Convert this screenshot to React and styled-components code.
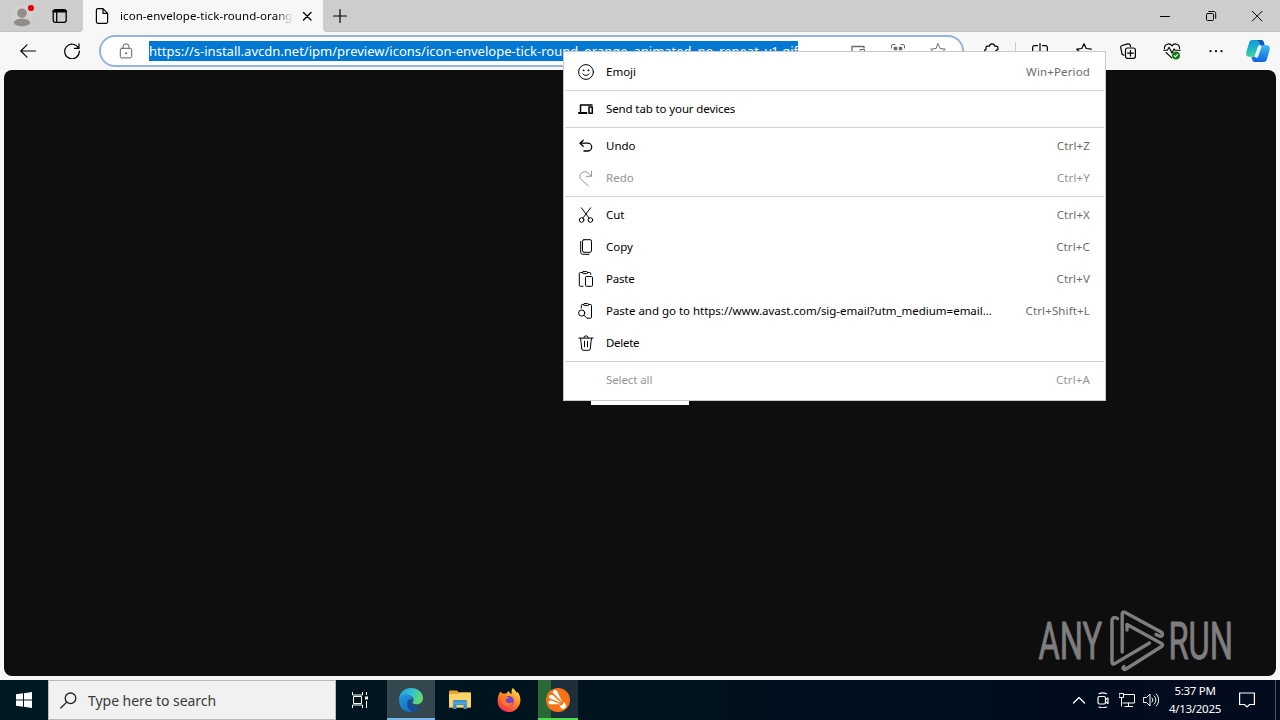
import React from 'react';
import styled, { createGlobalStyle } from 'styled-components';

const GlobalStyle = createGlobalStyle`
  * {
    box-sizing: border-box;
  }
  body {
    margin: 0;
    overflow: hidden;
    font-family: 'Noto Sans', 'Open Sans', sans-serif;
    font-size: 12px;
    color: #000;
  }
`;

const Desktop = styled.div`
  width: 1280px;
  height: 720px;
  display: flex;
  flex-direction: column;
  position: relative;
  background: #f7f7f7;
`;

const TabStrip = styled.div`
  height: 32px;
  display: flex;
  align-items: stretch;
  background: #f7f7f7;
`;

const StripStart = styled.div`
  width: 83px;
  display: flex;
  align-items: center;
  padding-left: 11px;
  gap: 16px;
  background: #cdcdcd;
  border-bottom: 1px solid #c2c2c2;
  border-bottom-right-radius: 4px;
`;

const Tab = styled.div`
  width: 240px;
  display: flex;
  align-items: center;
  padding-left: 11px;
`;

const TabTitle = styled.span`
  width: 173px;
  margin-left: 10px;
  padding-bottom: 1px;
  white-space: nowrap;
  font-size: 11.5px;
  letter-spacing: 0.07px;
  mask-image: linear-gradient(to right, #000 90%, transparent);
`;

const StripEnd = styled.div`
  flex: 1;
  display: flex;
  align-items: center;
  justify-content: space-between;
  padding: 0 12px 0 9px;
  background: #cdcdcd;
  border-bottom: 1px solid #c2c2c2;
  border-bottom-left-radius: 4px;
`;

const WindowButtons = styled.div`
  display: flex;
  gap: 24px;
`;

const Toolbar = styled.div`
  height: 38px;
  display: flex;
  align-items: center;
  padding-left: 12px;
`;

const ToolButton = styled.div`
  width: 32px;
  height: 32px;
  display: flex;
  align-items: center;
  justify-content: center;
  margin-right: ${props => (props.$gap === undefined ? 12 : props.$gap)}px;
`;

const ToolDivider = styled.div`
  width: 1px;
  height: 18px;
  margin-right: 8px;
  background: #c8c8c8;
`;

const AddressBar = styled.div`
  width: 865px;
  height: 32px;
  display: flex;
  align-items: center;
  margin-right: 12px;
  padding: 0 15px 0 17px;
  border: 2px solid #96b2df;
  border-radius: 16px;
  background: #fff;
`;

const Url = styled.span`
  height: 20px;
  width: 649px;
  flex-shrink: 0;
  margin-left: 15px;
  margin-right: 52px;
  line-height: 20px;
  white-space: nowrap;
  font-size: 13px;
  letter-spacing: 0.005px;
  background: #0078d4;
  color: #fff;
`;

const AddressIcons = styled.div`
  display: flex;
  gap: 24px;
`;

const Page = styled.div`
  height: 606px;
  margin: 0 4px;
  display: flex;
  align-items: center;
  justify-content: center;
  border-radius: 8px;
  background: #0e0e0e;
`;

const Picture = styled.div`
  width: 98px;
  height: 64px;
  background: #fff;
`;

const Watermark = styled.svg`
  position: absolute;
  left: 1034px;
  top: 606px;
`;

const Menu = styled.div`
  position: absolute;
  left: 563px;
  top: 51px;
  width: 543px;
  padding: 4px 1px;
  border: 1px solid #c9c9c9;
  background: #fff;
`;

const MenuItem = styled.div`
  height: 32px;
  display: flex;
  align-items: center;
  padding: 0 14px 0 13px;
  color: ${props => (props.$disabled ? '#949494' : '#000')};
`;

const MenuIcon = styled.span`
  width: 16px;
  height: 16px;
  margin-right: 12px;
`;

const MenuLabel = styled.span`
  flex: 1;
  padding-bottom: 2px;
  font-size: 11.5px;
  letter-spacing: ${props => props.$spacing || 0}px;
  white-space: nowrap;
`;

const Shortcut = styled.span`
  padding-bottom: 2px;
  font-size: 11.5px;
  letter-spacing: 0.14px;
  color: ${props => (props.$disabled ? '#949494' : '#6b6b6b')};
`;

const MenuLine = styled.div`
  height: 1px;
  margin: 2px 0;
  background: #d3d3d3;
`;

const Taskbar = styled.div`
  height: 40px;
  margin-top: 4px;
  display: flex;
  background: linear-gradient(to right, #001923, #00131f 45%, #000d1d 80%, #030c1e);
  color: #fff;
`;

const TaskCell = styled.div`
  width: ${props => props.$width || 48}px;
  display: flex;
  align-items: center;
  justify-content: center;
`;

const TaskViewCell = styled(TaskCell)`
  padding-right: 4px;
`;

const EdgeCell = styled(TaskCell)`
  background: #34474f;
  border-bottom: 2px solid #78b7ea;
  padding-top: 2px;
`;

const AvastCell = styled(TaskCell)`
  background: linear-gradient(to right, #2a6935 13px, #1c2f3a 13px);
  border-bottom: 2px solid #50dc50;
  padding-top: 2px;
`;

const SearchBox = styled.div`
  width: 288px;
  display: flex;
  align-items: center;
  padding-left: 11px;
  gap: 11px;
  border: 1px solid #b9b9b9;
  background: #f1f1f1;
  color: #3a3a3a;
  font-size: 14px;
  letter-spacing: -0.04px;
`;

const Tray = styled.div`
  margin-left: auto;
  display: flex;
  align-items: center;
`;

const TrayIcons = styled.div`
  display: flex;
  align-items: center;
  gap: 8px;
  margin-right: 1px;
`;

const Clock = styled.div`
  width: 70px;
  text-align: center;
  font-size: 11.5px;
  line-height: 18px;
  letter-spacing: -0.3px;
`;

const NoticeIcon = styled.div`
  display: flex;
  margin: 0 20px 0 9px;
`;

const ShowDesktop = styled.div`
  width: 5px;
  height: 40px;
  border-left: 1px solid #4b5365;
`;

const IconSvg = styled.svg`
  display: block;
  flex-shrink: 0;
`;

const Icon = ({ size = 16, box = 16, color = 'currentColor', weight = 1, children }) => (
  <IconSvg
    width={size}
    height={size}
    viewBox={`0 0 ${box} ${box}`}
    fill="none"
    stroke={color}
    strokeWidth={weight}
    strokeLinecap="round"
    strokeLinejoin="round"
  >
    {children}
  </IconSvg>
);

const icons = {
  emoji: (
    <>
      <circle cx="8" cy="8" r="7.4" />
      <path d="M4.8 9.8c1.5 2.2 4.9 2.2 6.4 0" />
      <circle cx="5.6" cy="6.3" r=".6" fill="currentColor" strokeWidth=".5" />
      <circle cx="10.4" cy="6.3" r=".6" fill="currentColor" strokeWidth=".5" />
    </>
  ),
  devices: (
    <>
      <path d="M2.5 11V4h11.5" strokeWidth="1.5" />
      <path d="M.2 12h9" strokeWidth="2" strokeLinecap="butt" />
      <path d="M11 6h3.300v6.200H11z" strokeWidth="1.500" />
    </>
  ),
  undo: <path d="M5.200 2.200L2 5.200l3.200 3.100M2.200 5.200h7.600a3.900 3.900 0 0 1 0 7.800H6" strokeWidth="1.300" />,
  redo: <path d="M13.500 1.300v5H8.400M13.200 6L10 2.800C5.500-.8-.7 5.300 3 9.400l7.500 6.600" />,
  cut: (
    <>
      <circle cx="3.600" cy="13" r="2.300" />
      <circle cx="12.400" cy="13" r="2.300" />
      <path d="M3.400.8l7.800 10.400M12.600.8L4.800 11.200" />
    </>
  ),
  copy: (
    <>
      <rect x="4.500" y=".7" width="9" height="12.600" rx="1.500" />
      <path d="M2.700 2.500v10.400c0 1.600.8 2.400 2.400 2.400h6" />
    </>
  ),
  paste: (
    <>
      <path d="M5 15.300H2.300a1 1 0 0 1-1-1V2.500a1 1 0 0 1 1-1h2M9.700 1.500h2a1 1 0 0 1 1 1v1" />
      <rect x="4.400" y=".6" width="5.200" height="2" rx="1" />
      <rect x="7.500" y="5.500" width="7" height="9.800" rx="1" />
    </>
  ),
  pasteGo: (
    <>
      <path d="M3.300 5V2.500a1 1 0 0 1 1-1h1M10.800 1.500h1.700a1 1 0 0 1 1 1v11.700a1 1 0 0 1-1 1H9.500" />
      <rect x="5.500" y=".6" width="5.200" height="2" rx="1" />
      <circle cx="3.700" cy="10" r="3.100" />
      <path d="M6 12.300l3 3" />
    </>
  ),
  trash: (
    <path d="M.8 3.100h14.400M5.800 3a2.200 2.200 0 0 1 4.400 0M2.600 3.300l1.200 10.800c.1.800.5 1.200 1.300 1.200h5.800c.8 0 1.200-.4 1.300-1.200l1.200-10.800M6.500 6.300v5.500M9.500 6.300v5.500" />
  ),
};

const menuGroups = [
  [{ icon: 'emoji', label: 'Emoji', keys: 'Win+Period' }],
  [{ icon: 'devices', label: 'Send tab to your devices', spacing: -0.12 }],
  [
    { icon: 'undo', label: 'Undo', keys: 'Ctrl+Z' },
    { icon: 'redo', label: 'Redo', keys: 'Ctrl+Y', disabled: true },
  ],
  [
    { icon: 'cut', label: 'Cut', keys: 'Ctrl+X' },
    { icon: 'copy', label: 'Copy', keys: 'Ctrl+C' },
    { icon: 'paste', label: 'Paste', keys: 'Ctrl+V', spacing: -0.2 },
    {
      icon: 'pasteGo',
      label: 'Paste and go to https://www.avast.com/sig-email?utm_medium=email...',
      keys: 'Ctrl+Shift+L',
      spacing: -0.02,
    },
    { icon: 'trash', label: 'Delete', spacing: -0.3 },
  ],
  [{ label: 'Select all', keys: 'Ctrl+A', disabled: true, spacing: -0.1 }],
];

const star = 'M8 .8l2.2 4.7 5.1.7-3.7 3.6.9 5.1L8 12.5l-4.5 2.4.9-5.1L.7 6.200l5.1-.7z';

const ContextMenu = () => (
  <Menu>
    {menuGroups.map((group, i) => (
      <React.Fragment key={i}>
        {i > 0 && <MenuLine />}
        {group.map(item => (
          <MenuItem key={item.label} $disabled={item.disabled}>
            <MenuIcon>{item.icon && <Icon>{icons[item.icon]}</Icon>}</MenuIcon>
            <MenuLabel $spacing={item.spacing}>{item.label}</MenuLabel>
            {item.keys && <Shortcut $disabled={item.disabled}>{item.keys}</Shortcut>}
          </MenuItem>
        ))}
      </React.Fragment>
    ))}
  </Menu>
);

const BrowserTabs = () => (
  <TabStrip>
    <StripStart>
      <Icon size={24} box={24} color="none">
        <circle cx="11" cy="12" r="11" fill="#d3d0ce" />
        <circle cx="11" cy="9.200" r="4.800" fill="#918d8a" />
        <path d="M3 18.500c0-5 16-5 16 0 0 5-16 5-16 0z" fill="#918d8a" />
        <circle cx="20" cy="4" r="3.100" fill="#e3000b" />
      </Icon>
      <Icon size={18} box={18} weight={1.3}>
        <rect x="2.200" y="2.700" width="13" height="12.600" rx="2" />
        <path d="M2.700 4.300h12" strokeWidth="2.400" />
        <path d="M5.700 5v10" />
      </Icon>
    </StripStart>
    <Tab>
      <Icon weight={1.2}>
        <path d="M3.900.7H9l4.600 4.600v8.500a1.500 1.500 0 0 1-1.500 1.500H3.900a1.500 1.500 0 0 1-1.500-1.500V2.200A1.500 1.500 0 0 1 3.900.7M9 .9v4.500h4.400" />
      </Icon>
      <TabTitle>icon-envelope-tick-round-orang</TabTitle>
      <Icon size={28} box={28} weight={1.3}>
        <path d="M10.500 10.500l7.500 7.500M18 10.500L10.500 18" />
      </Icon>
    </Tab>
    <StripEnd>
      <Icon weight={1.2}>
        <path d="M8 1.500v13M1.500 8h13" />
      </Icon>
      <WindowButtons>
        <Icon size={22} box={22}>
          <path d="M6.500 11.500h9" />
        </Icon>
        <Icon size={22} box={22}>
          <rect x="6.500" y="8.500" width="7" height="7" rx="1" />
          <path d="M8.800 6.500h5c1.200 0 1.900.7 1.900 1.900v5" />
        </Icon>
        <Icon size={22} box={22}>
          <path d="M6.300 6.300l9.700 9.700M16 6.300L6.300 16" />
        </Icon>
      </WindowButtons>
    </StripEnd>
  </TabStrip>
);

const BrowserToolbar = () => (
  <Toolbar>
    <ToolButton>
      <Icon weight={1.1}>
        <path d="M7 1.800L.8 8 7 14.200M1 8h14.500" />
      </Icon>
    </ToolButton>
    <ToolButton $gap={11}>
      <Icon weight={1.2}>
        <path d="M14.600 5.300A7.300 7.300 0 1 0 15.300 8M15 .8v4.600h-4.600" />
      </Icon>
    </ToolButton>
    <AddressBar>
      <Icon color="#5f5f5f">
        <rect x="2.300" y="5.300" width="11.400" height="9.600" rx="1.500" />
        <path d="M5 5V3.800a3 3 0 0 1 6 0V5" />
        <circle cx="8" cy="10.200" r=".8" fill="#5f5f5f" strokeWidth=".4" />
      </Icon>
      <Url>https://s-install.avcdn.net/ipm/preview/icons/icon-envelope-tick-round_orange_animated_no_repeat_v1.gif</Url>
      <AddressIcons>
        <Icon color="#6b6b6b">
          <path d="M2 12V3.500h12V5M.8 12.500h8" strokeWidth="1.300" />
          <rect x="10.500" y="6.500" width="4" height="7" />
        </Icon>
        <Icon color="#6b6b6b">
          <path d="M1.500 5V3a1.500 1.500 0 0 1 1.500-1.500h2M11 1.500h2A1.500 1.500 0 0 1 14.500 3v2M1.500 11v2A1.500 1.500 0 0 0 3 14.500h2M11 14.500h2a1.500 1.500 0 0 0 1.500-1.500v-2" />
          <path d="M4.500 4.500h2v2h-2zM9.500 4.500h2v2h-2zM4.500 9.500h2v2h-2zM9.500 9.500h2v2h-2z" fill="#6b6b6b" strokeWidth="1.600" />
        </Icon>
        <Icon color="#6b6b6b">
          <path d={star} />
        </Icon>
      </AddressIcons>
    </AddressBar>
    <ToolButton $gap={7}>
      <Icon weight={1.2}>
        <path d="M2 4.500c0-1 .5-1.300 1.400-1.300h2c.3-3.200 5-3.200 5.300 0h1.700c1 0 1.500.5 1.500 1.500v2c-3 .3-3 4.400 0 4.800v2c0 1-.5 1.500-1.500 1.500h-9c-1 0-1.400-.5-1.400-1.500v-2c-2.800-.4-2.800-4.500 0-4.800z" />
      </Icon>
    </ToolButton>
    <ToolDivider />
    <ToolButton>
      <Icon weight={1.2}>
        <path d="M5.500 2.700H2.200A1.500 1.500 0 0 0 .7 4.200v7.600a1.500 1.500 0 0 0 1.500 1.500h3.300M10.500 2.700h3.300a1.500 1.500 0 0 1 1.500 1.500v7.600a1.500 1.500 0 0 1-1.500 1.500h-3.300M8 .5v15" />
      </Icon>
    </ToolButton>
    <ToolButton>
      <Icon weight={1.2}>
        <path d="M.8 6.200l5-.7L8 .8l2.200 4.700 5.100.7M.8 6.300l3.600 3.500-.9 5.100 4-2.200M11 9.500h4.500M11 12.500h3" />
      </Icon>
    </ToolButton>
    <ToolButton>
      <Icon weight={1.2}>
        <path d="M4.200 12.200l-1-.3a2 2 0 0 1-1.400-2.300L.7 4.700A2 2 0 0 1 2 2.500L7.800.9a2 2 0 0 1 2.400 1.300l.4 1.500" />
        <rect x="5.500" y="5" width="9.900" height="10.300" rx="2" />
        <path d="M10.500 7.300v5.800M7.600 10.200h5.800" />
      </Icon>
    </ToolButton>
    <ToolButton>
      <Icon size={18} box={18} weight={1.1}>
        <path d="M9 4C6.800.2 1.200 2.100 1.400 6.600M9 4c2.200-3.800 7.800-1.900 7.600 2.600M.7 8.300h3.600l1.800-3 2.800 5.800 2.200-4.200 1.100 1.400h5M3 10.500l5.800 5.300" />
        <circle cx="13" cy="13.500" r="4" fill="#107c10" stroke="none" />
        <path d="M11.200 13.700l1.200 1.200 2.300-2.500" stroke="#fff" />
      </Icon>
    </ToolButton>
    <ToolButton $gap={10}>
      <Icon color="none">
        <circle cx="2.500" cy="8.200" r="1.150" fill="#111" />
        <circle cx="8" cy="8.200" r="1.150" fill="#111" />
        <circle cx="13.500" cy="8.200" r="1.150" fill="#111" />
      </Icon>
    </ToolButton>
    <ToolButton $gap={0}>
      <Icon size={24} box={24} color="none">
        <defs>
          <linearGradient id="copLeft" x1="0" y1="0" x2=".3" y2="1">
            <stop offset="0" stopColor="#158fd9" />
            <stop offset=".55" stopColor="#19b5cb" />
            <stop offset="1" stopColor="#46d98a" />
          </linearGradient>
          <linearGradient id="copRight" x1=".5" y1="0" x2=".4" y2="1">
            <stop offset="0" stopColor="#37bdf0" />
            <stop offset="1" stopColor="#1263dc" />
          </linearGradient>
        </defs>
        <path d="M6.500 1H15c2 0 2.400 1 3 3l.6 2.200h-3.800c-2 0-2.700 1-3.300 3l-2 6c-.6 2-1.300 2.600-3 2.600H3.300C.3 17.800-.3 15.500.4 13L3 4c.7-2.200 1.400-3 3.500-3z" fill="url(#copLeft)" />
        <path d="M17.500 23H9c-2 0-2.400-1-3-3l-.6-2.200h2c2 0 3-1 3.600-3l2-6c.6-2 1.300-2.600 3-2.600h4.700c3 0 3.600 2.300 2.900 4.800L21 20c-.7 2.200-1.400 3-3.500 3z" fill="url(#copRight)" />
        <path d="M9 1h6c2 0 2.400 1 3 3l.6 2.200h-4C13.200 3.500 13 1 9 1z" fill="#1552b8" />
        <path d="M13.700 8L10.500 17" stroke="#f3fbff" strokeWidth="3.400" />
      </Icon>
    </ToolButton>
  </Toolbar>
);

const AnyRun = () => (
  <Watermark width="204" height="72" viewBox="0 0 204 72">
    <g
      fill="#7e7e7e"
      stroke="#7e7e7e"
      strokeWidth=".9"
      fontFamily="Roboto, sans-serif"
      fontSize="51"
    >
      <text transform="translate(4.500 53) scale(.64 1)">ANY</text>
      <text transform="translate(134.500 53) scale(.64 1)">RUN</text>
    </g>
    <g fill="none" stroke="#7e7e7e" strokeWidth="3.4" strokeLinejoin="round" strokeLinecap="round">
      <path d="M83.500 12.500L82 11.800c-2.500-.8-4 .7-4 3V56c0 2 1.200 2.500 2.700 1.600L115.500 37" />
      <path d="M88.200 46V8c0-1.800 1.200-2.500 2.600-1.700L127 26c2.500 1.800 1.500 4.800-1.200 4.300L122 28.500" />
      <path d="M93 24v-5.500l34.500 19c1.500 1 1.500 2 0 3L92 63c-2.200 1.200-4-.5-2-2.500" />
    </g>
  </Watermark>
);

const WindowsTaskbar = () => (
  <Taskbar>
    <TaskCell>
      <Icon color="none">
        <path d="M0 2.300L7 1.300v6.200H0zM8 1.200L16 0v7.500H8zM0 8.500h7v6.200l-7-1zM8 8.500h8V16l-8-1.200z" fill="#fff" />
      </Icon>
    </TaskCell>
    <SearchBox>
      <Icon size={17} box={17} color="#222" weight={1.3}>
        <circle cx="10.500" cy="6.300" r="5.300" />
        <path d="M6.700 10.100L.8 16" />
      </Icon>
      <span>Type here to search</span>
    </SearchBox>
    <TaskViewCell $width={51}>
      <Icon size={18} box={18}>
        <path d="M1.500 1v3h10V1M1.500 17v-3h10v3M2.500 5.500h8v7h-8zM15.500 1v3M15.500 10v7" strokeLinecap="butt" />
        <path d="M14 5.500h3v3h-3z" fill="#fff" stroke="none" />
      </Icon>
    </TaskViewCell>
    <EdgeCell>
      <Icon size={24} box={24} color="none">
        <defs>
          <linearGradient id="edgeTop" x1="0" y1=".3" x2="1" y2=".6">
            <stop offset="0" stopColor="#249fd9" />
            <stop offset=".5" stopColor="#31c4d0" />
            <stop offset="1" stopColor="#69dc62" />
          </linearGradient>
          <linearGradient id="edgeBody" x1="0" y1="0" x2=".8" y2="1">
            <stop offset="0" stopColor="#2498dd" />
            <stop offset="1" stopColor="#1466b5" />
          </linearGradient>
        </defs>
        <path d="M0 11C.5 4.500 5.500 0 12 0c7 0 12 4.500 12 10 0 4-3 6.300-6.500 6.300-3.500 0-4.300-1.500-3.700-2.500 2.500-4-2-7-5.800-6.500C4 7.500 1 9.500 0 11z" fill="url(#edgeTop)" />
        <path d="M0 12c0-4 4-6.200 8-5.800 3.500.3 5.800 2.800 5.300 5.800-2-1.500-5 1-4.300 4.300C9.800 20 15 22 20.500 18.800 14.500 27.500 0 25 0 12z" fill="url(#edgeBody)" />
        <path d="M9.500 12C6.500 16 8.500 22 14 23.800c3.500-.5 6.500-3 8-5.800-4 1.800-9.500.3-9.500-4.500 0-1.500-1.500-2.500-3-1.500z" fill="#164c95" />
      </Icon>
    </EdgeCell>
    <TaskCell $width={49}>
      <Icon size={22} box={22} color="none">
        <path d="M0 3c0-1 .5-1.500 1.500-1.500H8l2 2h11.500v15H0z" fill="#e9a52c" />
        <path d="M0 5h9l2-1.500h10c.6 0 1 .4 1 1v14H0z" fill="#fbd568" />
        <path d="M4 20v-7.500c0-1 .6-1.500 1.500-1.500h11c1 0 1.500.6 1.500 1.500V20h-3.500v-4h-7v4z" fill="#3c91d1" />
        <path d="M4 14h14" stroke="#67b2e3" />
      </Icon>
    </TaskCell>
    <TaskCell $width={49}>
      <Icon size={24} box={24} color="none">
        <defs>
          <linearGradient id="fox" x1=".8" y1="0" x2=".2" y2="1">
            <stop offset="0" stopColor="#ffe14a" />
            <stop offset=".45" stopColor="#ff8a24" />
            <stop offset="1" stopColor="#ee2457" />
          </linearGradient>
        </defs>
        <path d="M3.500 3.500l2.300 2.300C7 5.500 8.500 5.500 9 5.800c1-1.500 2-2.300 3-2.600.5 1.500 1.500 2 3 2.800-1-2.500-.5-4.500.7-6 1.800 1.300 3 3.300 4 4.800.6-.3.5-.8.5-1.300 3.800 4.500 4.300 10.500 1.300 15A11.300 11.300 0 0 1 1.500 17.500C-.3 13 .7 7.500 3.500 3.500z" fill="url(#fox)" />
        <circle cx="12" cy="13" r="4.900" fill="#7542d8" />
        <path d="M4 8.500c3-1.500 5.500.3 7.800.8 0 1.500-3 1.300-3.200 3 .7 4 6 3.300 7.400 1.200-.3 5-7.500 6.500-11 1.500z" fill="#ff7a24" />
      </Icon>
    </TaskCell>
    <TaskCell $width={5} />
    <AvastCell $width={40}>
      <Icon size={24} box={24} color="none">
        <circle cx="12" cy="12" r="12" fill="#fa7416" />
        <path d="M7.500 2.400c1.200-1 3-.5 3.700 1l5.300 10.800L7.300 5.200c-.8-.8-.7-2 .2-2.800z" fill="#fff" />
        <path d="M3.600 7.500c1-1.100 2.500-1 3.600-.1l8.300 7.800-11.300-4.700c-1.200-.6-1.500-2-.6-3z" fill="#fff" />
        <path d="M2.500 14c.3-1.300 1.500-1.800 2.800-1.500l9.200 3.700H4.500c-1.400-.1-2.200-1.100-2-2.200z" fill="#fff" />
        <path d="M13.500 17.800c2.500-.2 4-1.600 4.400-4 2.500 2.700 2.600 5.300.8 6.700-1.900 1.200-4.200-.2-5.200-2.700z" fill="#fff" />
      </Icon>
    </AvastCell>
    <Tray>
      <TrayIcons>
        <Icon weight={1.3}>
          <path d="M2.500 11L8 5.500l5.500 5.500" />
        </Icon>
        <Icon weight={1.2}>
          <rect x="3" y="4.500" width="7.500" height="7.500" rx="1.500" />
          <path d="M10.500 7.500L13 6v5.500L10.500 10M4 1.700c2.500-1 5-1 7.500 0M4 15c2.500 1 5 1 7.500 0" />
        </Icon>
        <Icon>
          <path d="M4.500 2.500h11v8.500H4M9.500 11v3.500M6 14.500h7.500M.5 1.500h4v4h-4zM2.500 5.500v8.500" strokeLinejoin="miter" />
        </Icon>
        <Icon>
          <path d="M.7 5.500h2.800L7 2v12l-3.500-3.500H.7zM9 6c1.200 1.200 1.200 2.800 0 4M11.200 4c2.300 2.300 2.300 5.700 0 8M13.300 2c3.200 3.500 3.200 8.500 0 12" />
        </Icon>
      </TrayIcons>
      <Clock>
        <div>5:37 PM</div>
        <div>4/13/2025</div>
      </Clock>
      <NoticeIcon>
        <Icon weight={1.2}>
          <path d="M.6 1h14.800v11.500H10.500L8 15l-2.500-2.500H.6z" strokeLinejoin="miter" />
        </Icon>
      </NoticeIcon>
      <ShowDesktop />
    </Tray>
  </Taskbar>
);

const App = () => (
  <>
    <GlobalStyle />
    <Desktop>
      <BrowserTabs />
      <BrowserToolbar />
      <Page>
        <Picture />
      </Page>
      <WindowsTaskbar />
      <AnyRun />
      <ContextMenu />
    </Desktop>
  </>
);

export default App;
